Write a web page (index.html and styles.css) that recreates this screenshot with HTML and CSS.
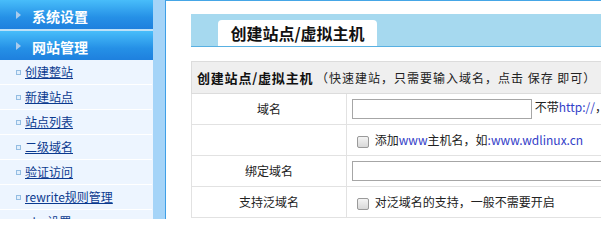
FILE: index.html
```html
<!DOCTYPE html>
<html lang="zh-CN">
<head>
<meta charset="utf-8">
<title>创建站点/虚拟主机</title>
<link rel="stylesheet" href="styles.css">
</head>
<body>
<div class="frame">
  <aside class="sidebar">
    <div class="menu-head menu-head-first"><span class="arrow"></span><span>系统设置</span></div>
    <div class="menu-head"><span class="arrow"></span><span>网站管理</span></div>
    <ul class="menu-list">
      <li class="menu-item"><span class="bullet"></span><a href="#">创建整站</a></li>
      <li class="menu-item"><span class="bullet"></span><a href="#">新建站点</a></li>
      <li class="menu-item"><span class="bullet"></span><a href="#">站点列表</a></li>
      <li class="menu-item"><span class="bullet"></span><a href="#">二级域名</a></li>
      <li class="menu-item"><span class="bullet"></span><a href="#">验证访问</a></li>
      <li class="menu-item"><span class="bullet"></span><a href="#">rewrite规则管理</a></li>
      <li class="menu-item"><span class="bullet"></span><a href="#">php设置</a></li>
    </ul>
  </aside>
  <div class="divider"></div>
  <main class="main">
    <div class="tabbar">
      <div class="tab">创建站点/虚拟主机</div>
    </div>
    <table class="form">
      <tr class="form-head">
        <td colspan="2"><b class="title">创建站点/虚拟主机</b> <span class="note">（快速建站，只需要输入域名，点击 保存 即可）</span></td>
      </tr>
      <tr>
        <td class="label">域名</td>
        <td class="field"><input class="text text-short" type="text"> 不带<span class="blue">http://</span>，如：www.wdlinux.cn</td>
      </tr>
      <tr>
        <td class="label"></td>
        <td class="field"><input class="chk" type="checkbox"> 添加<span class="blue">www</span>主机名，如<span class="blue">:www.wdlinux.cn</span></td>
      </tr>
      <tr>
        <td class="label">绑定域名</td>
        <td class="field"><input class="text text-long" type="text"></td>
      </tr>
      <tr>
        <td class="label">支持泛域名</td>
        <td class="field"><input class="chk" type="checkbox"> 对泛域名的支持，一般不需要开启</td>
      </tr>
    </table>
  </main>
</div>
</body>
</html>
```

FILE: styles.css
```css
html, body {
  margin: 0;
  padding: 0;
  background: #ffffff;
}
body {
  font-family: "Noto Sans CJK SC", "Liberation Sans", sans-serif;
  font-size: 12px;
  color: #222;
}
.frame {
  display: flex;
  height: 219px;
  overflow: hidden;
}
.sidebar {
  width: 153px;
  flex: none;
  background: #edf5ff;
}
.menu-head {
  height: 29px;
  display: flex;
  align-items: center;
  padding-top: 2px;
  box-sizing: border-box;
  background: linear-gradient(#48bdfa, #2590e6 60%, #1e80de);
  color: #fff;
  font-weight: bold;
  font-size: 14px;
  line-height: 16px;
}
.menu-head-first {
  border-bottom: 2px solid #bde1f8;
  height: 31px;
}
.arrow {
  width: 0;
  height: 0;
  border-top: 4px solid transparent;
  border-bottom: 4px solid transparent;
  border-left: 5px solid #a9cbec;
  margin: -2px 11px 0 16px;
}
.menu-list {
  list-style: none;
  margin: 0;
  padding: 0;
}
.menu-item {
  height: 24px;
  border-bottom: 1px solid #ffffff;
  display: flex;
  align-items: center;
  line-height: 14px;
  width: 152px;
}
.bullet {
  width: 3px;
  height: 3px;
  border: 1px solid #94bde3;
  background: #e2effc;
  margin: 0 4px 0 16px;
}
.menu-item a {
  color: #0b3a8f;
  text-decoration: underline;
  white-space: nowrap;
}
.divider {
  width: 12px;
  flex: none;
  background: #a5d4f8;
  border-right: 1px solid #3f9fe6;
}
.main {
  flex: 1;
  min-width: 0;
  border-top: 1px solid #45a6e6;
  padding: 13px 0 0 25px;
  overflow: hidden;
}
.tabbar {
  width: 560px;
  height: 32px;
  background: #a6d9ef;
  border-bottom: 1px solid #58b0e2;
  display: flex;
  align-items: flex-end;
  padding-left: 27px;
  box-sizing: content-box;
}
.tab {
  width: 159px;
  height: 26px;
  background: #fff;
  border-radius: 4px 4px 0 0;
  font-size: 16px;
  font-weight: bold;
  color: #111;
  line-height: 26px;
  text-align: center;
}
.form {
  margin-top: 14px;
  width: 560px;
  border-collapse: collapse;
  white-space: nowrap;
}
.form td {
  border: 1px solid #e2e2e2;
  padding: 0;
  line-height: 16px;
}
.form-head td {
  height: 30px;
  background: #efefef;
  border-color: #dcdcdc;
  padding-left: 5px;
  padding-top: 1px;
}
.title {
  font-size: 13px;
  letter-spacing: 0.8px;
  color: #111;
}
.note {
  letter-spacing: 1px;
}
.label {
  width: 154px;
  height: 30px;
  text-align: center;
}
.field {
  padding-left: 5px !important;
}
.text {
  height: 20px;
  box-sizing: border-box;
  border: 1px solid #a6a6a6;
  margin: 0;
  padding: 0;
  vertical-align: middle;
  background: #fff;
}
.text-short {
  width: 180px;
}
.text-long {
  width: 300px;
}
.chk {
  appearance: none;
  -webkit-appearance: none;
  width: 12px;
  height: 12px;
  margin: 0 3px 0 5px;
  border: 1px solid #9a9a9a;
  border-radius: 2px;
  background: linear-gradient(#f4f4f4, #d8d8d8);
  vertical-align: middle;
  box-sizing: border-box;
}
.blue {
  color: #3340c8;
}
```
